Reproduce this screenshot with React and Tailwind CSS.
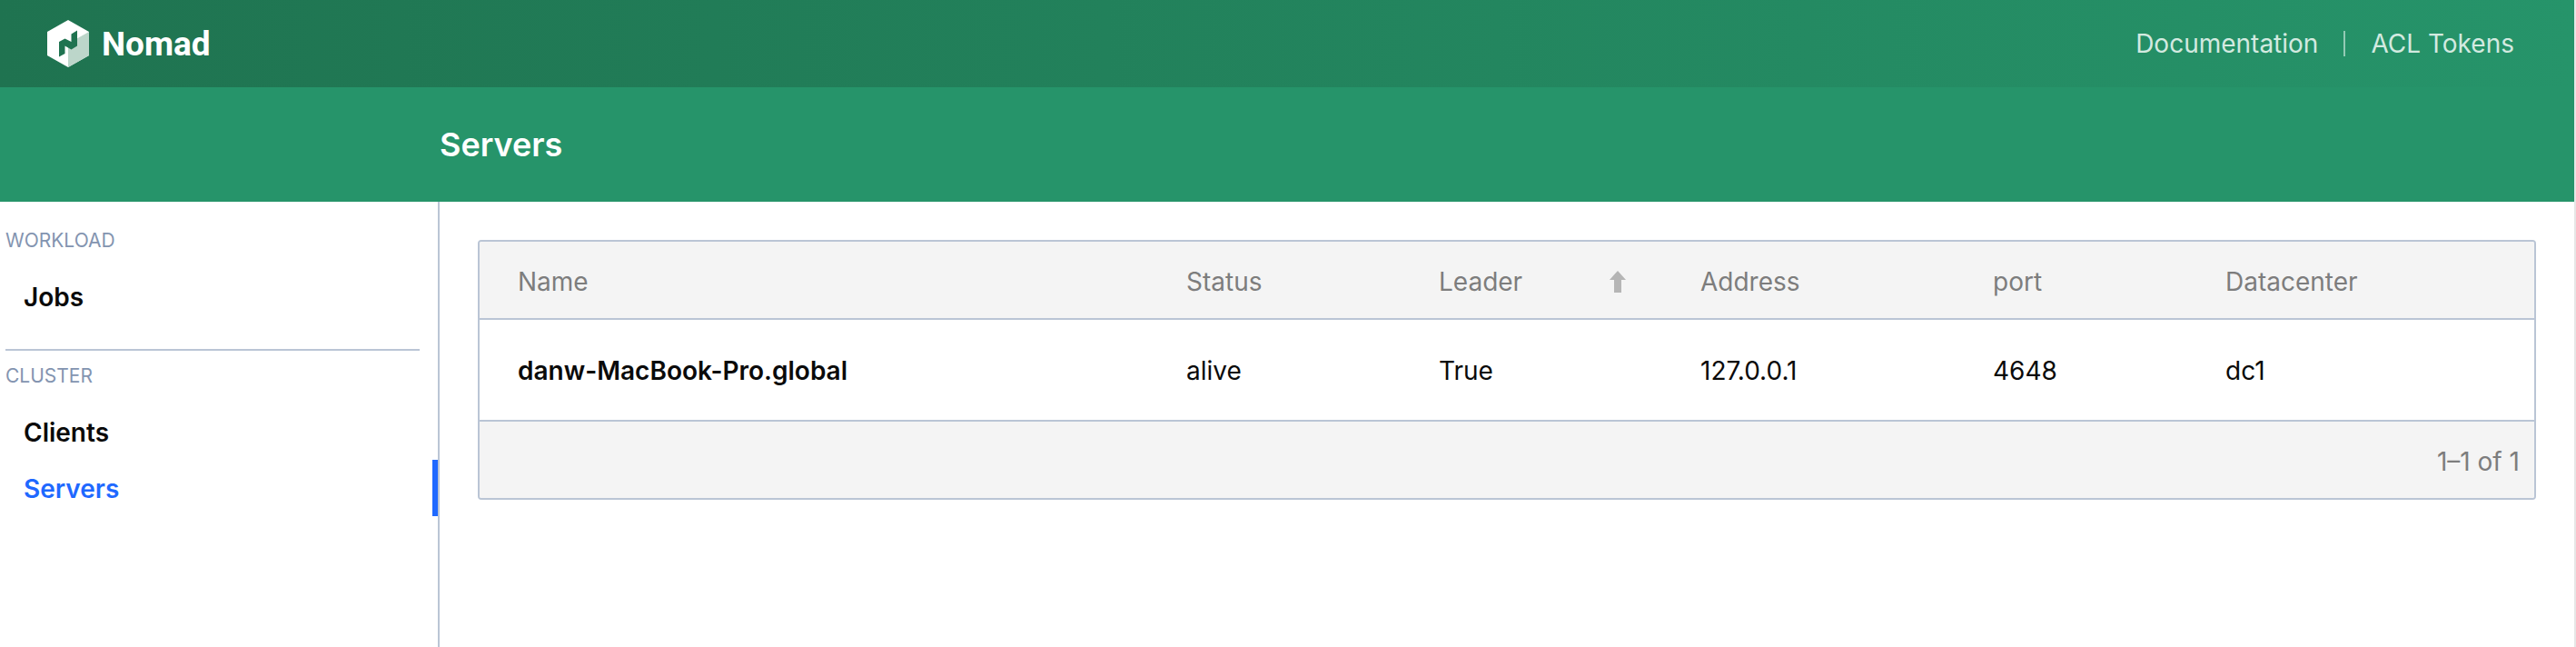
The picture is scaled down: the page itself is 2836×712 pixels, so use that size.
const columns = [
  { label: "Name", width: "w-[736px]" },
  { label: "Status", width: "w-[278px]" },
  { label: "Leader", width: "w-[288px]", sorted: true },
  { label: "Address", width: "w-[322px]" },
  { label: "port", width: "w-[256px]" },
  { label: "Datacenter", width: "w-[382px]" },
];

const servers = [
  {
    name: "danw-MacBook-Pro.global",
    cells: ["alive", "True", "127.0.0.1", "4648", "dc1"],
  },
];

const menu = [
  { label: "Workload", items: [{ label: "Jobs" }] },
  {
    label: "Cluster",
    items: [{ label: "Clients" }, { label: "Servers", active: true }],
  },
];

function NomadMark() {
  return (
    <svg className="h-[52px] w-[46px]" viewBox="0 0 46 52" aria-hidden="true">
      <path d="M23 0 46 13V39L23 52 0 39V13Z" fill="#fff" />
      <path d="M33 20.3 46 13V39L23 52V29Z" fill="#bcd6ca" />
      <path
        d="M13 24 19.5 20.6 26.5 24V15.4L33 11.4V28.6L26.5 32.4 19.5 28.4V37L13 40.6Z"
        fill="#1f7350"
      />
    </svg>
  );
}

function SortArrow() {
  return (
    <svg className="h-6 w-[18px]" viewBox="0 0 18 24" aria-hidden="true">
      <path d="M9 0 18 10H13V24H5V10H0Z" fill="#b5b5b5" />
    </svg>
  );
}

function MenuSection({ label, items }) {
  return (
    <section className="mr-5 ml-1.5 border-b-2 border-[#bac5d5] pb-[27px] last:border-b-0">
      <h2 className="flex h-[58px] items-center pb-0.5 text-[21px] font-normal text-[#8394b0] uppercase">
        {label}
      </h2>
      <ul>
        {items.map((item) => (
          <li key={item.label} className="-mr-5">
            <a
              href="#"
              aria-current={item.active ? "page" : undefined}
              className={
                item.active
                  ? "flex h-[62px] items-center border-r-6 border-[#1f69ff] pt-0.5 pl-5 text-[28px] font-semibold text-[#1f69ff]"
                  : "flex h-[62px] items-center pt-0.5 pl-5 text-[28px] font-semibold text-[#0a0a0a]"
              }
            >
              {item.label}
            </a>
          </li>
        ))}
      </ul>
    </section>
  );
}

export default function App() {
  return (
    <div className="flex min-h-screen flex-col border-r-2 border-[#e6e6e6] bg-white font-['Inter',sans-serif] text-[28px] text-[#0a0a0a]">
      <header>
        <nav className="flex h-24 items-center justify-between bg-linear-to-r from-[#1f7350] to-[#26946a] pr-[66px] pl-[52px]">
          <a href="#" className="flex items-center gap-3.5">
            <NomadMark />
            <span className="font-['Roboto',sans-serif] text-[37px] leading-none font-bold text-white">
              Nomad
            </span>
          </a>
          <div className="flex items-center text-[#d3eae0]">
            <a href="#" className="border-r-2 border-[#93cab5] pr-7 leading-7">
              Documentation
            </a>
            <a href="#" className="pl-7 leading-7">
              ACL Tokens
            </a>
          </div>
        </nav>
        <div className="flex h-[126px] items-center bg-[#26946a] pl-[484px]">
          <h1 className="text-[36px] font-semibold text-white">Servers</h1>
        </div>
      </header>
      <div className="flex grow">
        <aside className="w-[484px] shrink-0 border-r-2 border-[#bac5d5] pt-[15px]">
          {menu.map((section) => (
            <MenuSection key={section.label} {...section} />
          ))}
        </aside>
        <main className="min-w-0 grow p-[42px]">
          <div className="overflow-hidden rounded-sm border-2 border-[#bac5d5]">
            <table className="w-full table-fixed text-left">
              <thead className="bg-[#f4f4f4] text-[#7d7d7d]">
                <tr className="h-[85px] border-b-2 border-[#bac5d5]">
                  {columns.map((column) => (
                    <th
                      key={column.label}
                      scope="col"
                      className={`${column.width} pt-1 pr-10 pl-[42px] font-normal`}
                    >
                      {column.sorted ? (
                        <button className="flex w-full items-center justify-between">
                          {column.label}
                          <SortArrow />
                        </button>
                      ) : (
                        column.label
                      )}
                    </th>
                  ))}
                </tr>
              </thead>
              <tbody>
                {servers.map((server) => (
                  <tr key={server.name} className="h-28 border-b-2 border-[#bac5d5]">
                    <th scope="row" className="pt-0.5 pr-10 pl-[42px] font-semibold">
                      {server.name}
                    </th>
                    {server.cells.map((cell) => (
                      <td key={cell} className="pt-0.5 pr-10 pl-[42px]">
                        {cell}
                      </td>
                    ))}
                  </tr>
                ))}
              </tbody>
            </table>
            <div className="flex h-[84px] items-center justify-end bg-[#f4f4f4] pt-1 pr-4 text-[#7d7d7d]">
              1–1 of 1
            </div>
          </div>
        </main>
      </div>
    </div>
  );
}
